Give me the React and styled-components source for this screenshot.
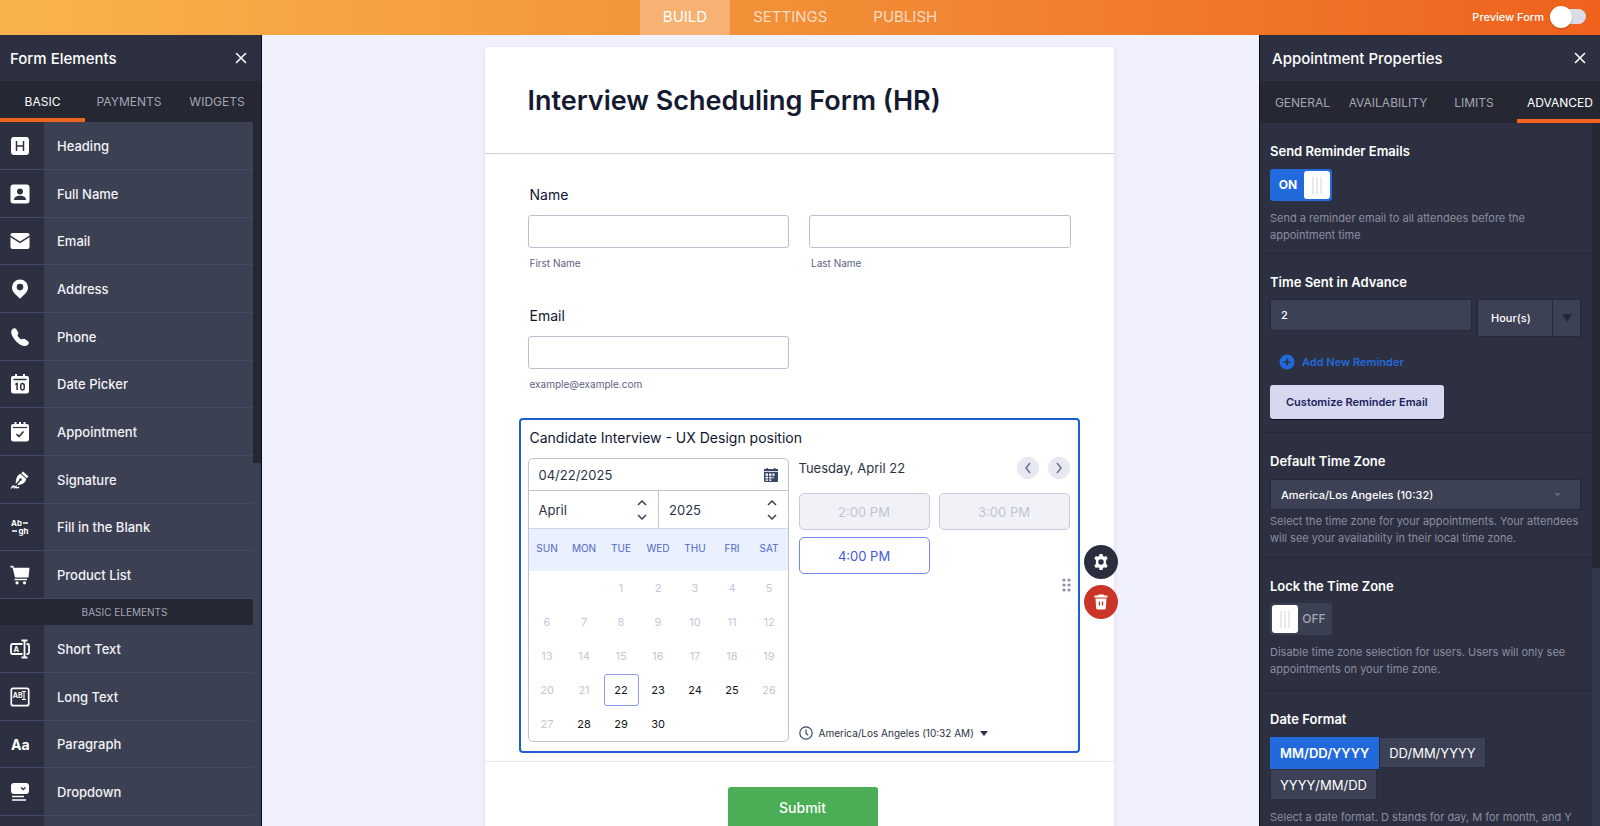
import React from "react";
import styled, { createGlobalStyle, css } from "styled-components";

const Global = createGlobalStyle`
  * { box-sizing: border-box; }
  html, body, #root { height: 100%; }
  body {
    margin: 0;
    overflow: hidden;
    font-family: Inter, "Liberation Sans", sans-serif;
    color: #0f1631;
    background: #f1f0fd;
  }
  button, input, select { font: inherit; color: inherit; }
  button { padding: 0; border: 0; background: none; cursor: pointer; }
  h1, h2, h3, p, ul, fieldset { margin: 0; padding: 0; border: 0; }
  ul { list-style: none; }
`;

const Page = styled.div`
  height: 100vh;
  display: grid;
  grid-template-rows: 35px minmax(0, 1fr);
`;

/* ---------- top bar ---------- */
const TopBar = styled.header`
  display: grid;
  grid-template-columns: 1fr auto 1fr;
  align-items: stretch;
  background: linear-gradient(90deg, #f8b44c 0%, #f18a34 55%, #ee611d 100%);
`;
const TopTabs = styled.nav`
  grid-column: 2;
  display: flex;
`;
const TopTab = styled.a`
  display: flex;
  align-items: center;
  padding: 0 23px 2px;
  font-size: 15px;
  text-decoration: none;
  color: ${(p) => (p.$active ? "#ffffff" : "#fcdcc2")};
  background: ${(p) => (p.$active ? "#f6b173" : "transparent")};
`;
const Preview = styled.label`
  justify-self: end;
  display: flex;
  align-items: center;
  gap: 6px;
  padding: 0 14px 2px 0;
  font-size: 11px;
  font-weight: 500;
  color: #ffffff;
`;
const PreviewSwitch = styled.input`
  appearance: none;
  display: flex;
  align-items: center;
  width: 36px;
  height: 15px;
  margin: 0;
  border-radius: 8px;
  background: #dcdce6;
  &::before {
    content: "";
    width: 22px;
    height: 22px;
    flex: none;
    border-radius: 50%;
    background: #ffffff;
    box-shadow: 0 1px 2px rgba(120, 50, 0, 0.4);
  }
`;

const Workspace = styled.div`
  display: grid;
  grid-template-columns: 262px minmax(0, 1fr) 341px;
  min-height: 0;
`;

/* ---------- side panels ---------- */
const Panel = styled.aside`
  display: flex;
  flex-direction: column;
  min-height: 0;
  overflow: hidden;
  color: #ffffff;
  background: #2d3040;
  border: 0 solid #0b0c1c;
  border-width: ${(p) => (p.$side === "left" ? "0 1px 0 0" : "0 0 0 1px")};
`;
const PanelHeader = styled.div`
  flex: none;
  display: flex;
  align-items: center;
  justify-content: space-between;
  height: 46px;
  padding: 0 14px 0 ${(p) => (p.$side === "left" ? "10px" : "12px")};
`;
const PanelTitle = styled.h2`
  font-size: 15px;
  font-weight: 500;
`;
const IconButton = styled.button`
  display: flex;
`;
const PanelTabs = styled.nav`
  flex: none;
  display: flex;
  height: ${(p) => (p.$side === "left" ? "41px" : "42px")};
  background: #252733;
`;
const PanelTab = styled.a`
  flex: 0 0 ${(p) => p.$basis};
  display: flex;
  align-items: center;
  justify-content: center;
  padding-top: 4px;
  font-size: 12px;
  text-decoration: none;
  color: ${(p) => (p.$active ? "#ffffff" : "#a3a6b5")};
  border-bottom: 4px solid ${(p) => (p.$active ? "#f0641f" : "transparent")};
`;
const PanelBody = styled.div`
  flex: 1;
  min-height: 0;
  overflow: hidden;
  display: grid;
  grid-template-columns: minmax(0, 1fr) 8px;
`;
const PanelContent = styled.div`
  display: flex;
  flex-direction: column;
  min-height: 0;
`;
const ScrollTrack = styled.div`
  background: ${(p) => p.$track};
`;
const ScrollThumb = styled.div`
  height: ${(p) => p.$size};
  background: #252733;
`;

const ElementRow = styled.li`
  display: grid;
  grid-template-columns: 44px 1fr;
  height: 48px;
  border-bottom: 1px solid #434967;
  &:nth-child(3n) { height: 47px; }
`;
const ElementIcon = styled.span`
  display: flex;
  align-items: center;
  padding-left: 10px;
  background: #2d3040;
`;
const ElementName = styled.button`
  padding-left: 13px;
  text-align: left;
  font-size: 13px;
  font-weight: 500;
  color: #f2f2f6;
  background: #3c4053;
`;
/* Carries the two column colours down to the end of the panel. */
const ListEnd = styled.div`
  flex: 1;
  margin-left: 44px;
  background: #3c4053;
`;
const GroupTitle = styled.h3`
  flex: none;
  display: flex;
  align-items: center;
  justify-content: center;
  height: 26px;
  padding-right: 4px;
  font-size: 10px;
  font-weight: 400;
  color: #a3a6b5;
  background: #252733;
`;

/* ---------- form canvas ---------- */
/* The left padding makes up for the narrower left panel, so that the form is centred in the window. */
const Canvas = styled.main`
  display: flex;
  justify-content: center;
  align-items: flex-start;
  min-height: 0;
  padding: 12px 0 0 77px;
  overflow: hidden;
  background: #f1f0fd;
`;
const FormCard = styled.form`
  width: 629px;
  min-height: 100%;
  flex: none;
  border-radius: 4px 4px 0 0;
  background: #ffffff;
  box-shadow: 0 1px 4px rgba(60, 60, 130, 0.12);
`;
const FormHeader = styled.div`
  padding: 36px 43px 34px;
  border-bottom: 1px solid #cdcfdd;
`;
const FormTitle = styled.h1`
  font-size: 27px;
  line-height: 36px;
  font-weight: 600;
  color: #141a30;
`;
const Questions = styled.div`
  padding: 30px 34px 8px;
  border-bottom: 1px solid #e6e7f3;
`;
const Question = styled.fieldset`
  padding: 0 9px;
  margin-bottom: ${(p) => p.$gap};
`;
const QuestionLabel = styled.div`
  padding-left: 2px;
  margin-bottom: 9px;
  font-size: 14px;
  line-height: 22px;
  color: #0f1631;
`;
const FieldPair = styled.div`
  display: grid;
  grid-template-columns: 1fr 1fr;
  gap: 20px;
`;
const Field = styled.label`
  display: block;
`;
const TextInput = styled.input`
  display: block;
  width: 100%;
  height: 33px;
  padding: 0 8px;
  border: 1px solid #bcbfce;
  border-radius: 3px;
  background: #ffffff;
`;
const SubLabel = styled.span`
  display: block;
  padding: 6px 2px 0;
  font-size: 10px;
  line-height: 18px;
  color: #5d6380;
`;

const Selected = styled.section`
  position: relative;
  padding: 7px 8px 9px 7px;
  border: 2px solid #1a5fd3;
  border-radius: 4px;
`;
const Scheduler = styled.div`
  display: grid;
  grid-template-columns: 261px minmax(0, 1fr);
  gap: 10px;
`;
const Calendar = styled.div`
  border: 1px solid #bfc3d6;
  border-radius: 5px;
  overflow: hidden;
  color: #2b3245;
`;
const DateRow = styled.label`
  display: flex;
  align-items: center;
  height: 32px;
  padding: 0 10px;
  border-bottom: 1px solid #bfc3d6;
`;
const DateInput = styled.input`
  flex: 1;
  min-width: 0;
  padding: 0;
  border: 0;
  outline: 0;
  font-size: 13px;
  background: none;
`;
const MonthRow = styled.div`
  display: grid;
  grid-template-columns: 1fr 1fr;
  height: 38px;
  border-bottom: 1px solid #d2d6e8;
`;
const Stepper = styled.div`
  display: flex;
  align-items: center;
  justify-content: space-between;
  padding: 0 11px 0 10px;
  font-size: 13px;
  & + & { border-left: 1px solid #bfc3d6; }
`;
const StepButtons = styled.div`
  display: grid;
  gap: 8px;
`;
const Days = styled.table`
  width: 100%;
  border-collapse: collapse;
  table-layout: fixed;
  text-align: center;
`;
const Weekday = styled.th`
  height: 42px;
  padding: 0 0 4px;
  font-size: 10px;
  font-weight: 400;
  color: #5068c6;
  background: #eaf0fe;
`;
const DayCell = styled.td`
  height: 34px;
  padding: 0;
`;
const DayButton = styled.button`
  width: 35px;
  height: 32px;
  border: 1px solid ${(p) => (p.$selected ? "#8c9bf0" : "transparent")};
  border-radius: 3px;
  font-size: 11px;
  line-height: 28px;
  color: ${(p) => (p.$open ? "#10131c" : "#c4c8d6")};
`;

const SlotsPane = styled.div`
  display: flex;
  flex-direction: column;
`;
const SlotsHeader = styled.div`
  display: flex;
  align-items: center;
  gap: 9px;
  height: 20px;
  margin-bottom: 15px;
  font-size: 13px;
  color: #2b3245;
`;
const SlotsDate = styled.span`
  flex: 1;
`;
const RoundButton = styled.button`
  display: flex;
  align-items: center;
  justify-content: center;
  width: 22px;
  height: 22px;
  border-radius: 50%;
  background: #e7e8f1;
`;
const Slots = styled.div`
  display: grid;
  grid-template-columns: 1fr 1fr;
  gap: 7px 9px;
`;
const Slot = styled.button`
  height: 37px;
  border: 1px solid #c8cbdb;
  border-radius: 5px;
  font-size: 13px;
  ${(p) =>
    p.disabled
      ? css`color: #c0c4d3; background: #f1f2f7;`
      : css`color: #3f59d8; border-color: #7088f0; background: #ffffff;`}
`;
const ZoneButton = styled.button`
  align-self: flex-start;
  display: flex;
  align-items: center;
  gap: 6px;
  margin-top: auto;
  font-size: 10px;
  line-height: 18px;
  color: #2b3245;
`;
const DragHandle = styled.span`
  position: absolute;
  right: 6px;
  top: 158px;
  display: flex;
`;
const FloatingActions = styled.div`
  position: absolute;
  right: -40px;
  top: 125px;
  display: grid;
  gap: 6px;
`;
const ActionButton = styled.button`
  display: flex;
  align-items: center;
  justify-content: center;
  width: 34px;
  height: 34px;
  border-radius: 50%;
  background: ${(p) => p.$tone};
`;
const SubmitArea = styled.div`
  display: flex;
  justify-content: center;
  padding: 25px 0 30px 7px;
`;
const Submit = styled.button`
  width: 150px;
  height: 41px;
  border-radius: 3px;
  font-size: 14px;
  font-weight: 500;
  color: #ffffff;
  background: #4bae57;
`;

/* ---------- property panel ---------- */
const Property = styled.section`
  padding: 19px 11px ${(p) => p.$bottom} 10px;
  border-bottom: 1px solid #252836;
  &:last-child { border-bottom: 0; }
`;
const PropertyName = styled.h3`
  margin-bottom: ${(p) => p.$gap || "8px"};
  font-size: 13px;
  line-height: 18px;
  font-weight: 600;
`;
const Help = styled.p`
  margin-top: ${(p) => p.$gap || "9px"};
  font-size: 11px;
  line-height: 17px;
  color: #8b8ea0;
`;
const Toggle = styled.label`
  display: flex;
  flex-direction: ${(p) => (p.$on ? "row" : "row-reverse")};
  align-items: center;
  width: 62px;
  height: 32px;
  padding: 2px;
  border-radius: 3px;
  font-size: 12px;
  font-weight: ${(p) => (p.$on ? 700 : 500)};
  color: ${(p) => (p.$on ? "#ffffff" : "#a3a6b5")};
  background: ${(p) => (p.$on ? "#2269dc" : "#3c4053")};
`;
const ToggleText = styled.span`
  flex: 1;
  padding-bottom: 2px;
  text-align: center;
`;
const ToggleInput = styled.input`
  appearance: none;
  display: flex;
  align-items: center;
  justify-content: center;
  width: 26px;
  height: 28px;
  margin: 0;
  border-radius: 3px;
  background: #ffffff;
  &::before {
    content: "";
    width: 10px;
    height: 17px;
    background: repeating-linear-gradient(90deg, #e9e9ec 0 2px, #ffffff 2px 4px);
  }
`;
const TimeRow = styled.div`
  display: grid;
  grid-template-columns: minmax(0, 1fr) 104px;
  align-items: start;
  gap: 5px;
`;
const DarkInput = styled.input`
  width: 100%;
  height: 32px;
  padding: 0 10px;
  border: 1px solid #252836;
  font-size: 11px;
  font-weight: 500;
  background: #3c4155;
`;
const SelectBox = styled.div`
  display: grid;
  grid-template-columns: minmax(0, 1fr) ${(p) => p.$arrow};
  height: ${(p) => p.$height};
  border: 1px solid #252836;
  background: #3c4155;
`;
const SelectInput = styled.select`
  appearance: none;
  width: 100%;
  border: 0;
  padding: 0 0 0 ${(p) => p.$inset};
  font-size: 11px;
  font-weight: 500;
  background: none;
  outline: 0;
`;
const SelectArrow = styled.span`
  display: flex;
  align-items: center;
  justify-content: center;
  border-left: ${(p) => (p.$divided ? "1px solid #252836" : "0")};
`;
const AddReminder = styled.button`
  display: flex;
  align-items: center;
  gap: 7px;
  margin: 17px 0 15px 9px;
  font-size: 11px;
  line-height: 16px;
  font-weight: 600;
  color: #2269dc;
`;
const Customize = styled.button`
  display: block;
  height: 34px;
  padding: 0 16px;
  border-radius: 3px;
  font-size: 11px;
  font-weight: 600;
  color: #1b1f5c;
  background: #d6d8f0;
  box-shadow: 0 1px 0 #0b0c1c;
`;
const Formats = styled.div`
  display: flex;
  flex-wrap: wrap;
`;
const Format = styled.button`
  height: ${(p) => (p.$active ? "32px" : "31px")};
  padding: 0 9px;
  border: 1px solid ${(p) => (p.$active ? "#2269dc" : "#292c3b")};
  font-size: 13px;
  font-weight: ${(p) => (p.$active ? 600 : 400)};
  background: ${(p) => (p.$active ? "#2269dc" : "#3c4155")};
`;

/* ---------- drawings ---------- */
const Close = () => (
  <svg width="12" height="12" viewBox="0 0 12 12" stroke="#fff" strokeWidth="1.6" strokeLinecap="round">
    <path d="M1.5 1.5l9 9M10.5 1.5l-9 9" />
  </svg>
);
const Chevron = ({ dir, color = "#3a4258", w = 10 }) => {
  const d = { up: "M1 5l4-4 4 4", down: "M1 1l4 4 4-4" }[dir];
  return (
    <svg width={w} height="6" viewBox="0 0 10 6" fill="none" stroke={color} strokeWidth="1.5">
      <path d={d} />
    </svg>
  );
};
const Caret = ({ w, h, color }) => (
  <svg width={w} height={h} viewBox="0 0 10 8" preserveAspectRatio="none" fill={color}>
    <path d="M0 0h10L5 8z" />
  </svg>
);

const D = "#2d3040";
const icons = {
  heading: (
    <>
      <rect x="1" y="1" width="18" height="18" rx="3" />
      <path d="M6.500 5v10M13.500 5v10M6.500 10h7" stroke={D} strokeWidth="1.500" fill="none" />
    </>
  ),
  user: (
    <>
      <rect x="0.500" y="0.500" width="19" height="19" rx="3" />
      <circle cx="10" cy="7.500" r="3" fill={D} />
      <path d="M4 16c0-3 3-4.300 6-4.300s6 1.300 6 4.300z" fill={D} />
    </>
  ),
  mail: (
    <>
      <path d="M2.500 2h15a2 2 0 012 2v.5L10 10.500.5 4.500V4a2 2 0 012-2z" />
      <path d="M.5 6.200L10 12.200l9.500-6V16a2 2 0 01-2 2h-15a2 2 0 01-2-2z" />
    </>
  ),
  pin: <path fillRule="evenodd" d="M10 .5a8 8 0 00-8 8C2 13.500 7 16.500 10 19.800c3-3.300 8-6.300 8-11.300a8 8 0 00-8-8zm0 4.300a3.300 3.300 0 110 6.600 3.300 3.300 0 010-6.600z" />,
  phone: <path d="M2 2.500C3.500 1 5.500.9 6.500 2.400L8 5c.7 1.300.3 2.300-.6 3.300.8 1.800 2.300 3.400 4.200 4.200 1-.8 2.300-1 3.400-.3l2.800 1.900c1.400 1 1.300 2.700-.1 3.800-2.600 2.200-7 1-11.300-3.200C1.800 10.200 0 5 2 2.500z" />,
  date: (
    <>
      <path d="M5 0h2v2h6V0h2v2h2a2 2 0 012 2v13a2.500 2.500 0 01-2.500 2.500h-13A2.500 2.500 0 011 17V4a2 2 0 012-2h2z" />
      <path d="M3.500 5.500h13" stroke={D} strokeWidth="1.500" />
      <path d="M5.300 10.500l1.800-1v6.500M10.800 11.300a1.700 1.700 0 013.400 0v2.900a1.700 1.700 0 01-3.400 0z" stroke={D} strokeWidth="1.500" fill="none" />
    </>
  ),
  appointment: (
    <>
      <path d="M4.500 0h2v2h2.500V0h2v2h2.500V0h2v2H17a2 2 0 012 2v13a2.500 2.500 0 01-2.500 2.500h-13A2.500 2.500 0 011 17V4a2 2 0 012-2h1.500z" />
      <path d="M3 5.500h14" stroke={D} strokeWidth="1.200" />
      <path d="M6.500 12l2.500 2.500 4.500-5" stroke={D} strokeWidth="1.600" fill="none" />
    </>
  ),
  signature: (
    <>
      <path d="M13 1.500l5.500 5-1.800 1.700-5.400-5z" />
      <path fillRule="evenodd" d="M10.500 3.800l5.700 5.300c-.5 3.500-3.500 5.700-9.200 6.200l3.300-4.500a1.300 1.300 0 10-1-.8L5.800 14C5.500 8.500 7.500 5 10.500 3.800z" />
      <path d="M1 18.500c2-3 3-3.500 3-1.500s1.500 0 2-.5c.5 2 2 1.500 3 .5" stroke="#fff" strokeWidth="1.300" fill="none" />
    </>
  ),
  blank: (
    <>
      <path d="M13 6h5M2 14h5" stroke="#fff" strokeWidth="1.600" />
      <text x="1" y="8.500" fontSize="8" fontWeight="700">Ab</text>
      <text x="8.500" y="16.500" fontSize="8" fontWeight="700">gh</text>
    </>
  ),
  cart: (
    <>
      <path d="M.5 0.800h2.700l.8 2h15.500l-1 9.700H5L2.500 2.500H.5zM4.500 13.800h12.500v1.500H4.500z" />
      <circle cx="7" cy="17.800" r="1.600" />
      <circle cx="14.500" cy="17.800" r="1.600" />
    </>
  ),
  short: (
    <>
      <path d="M12.500 5H2.500a1.500 1.500 0 00-1.500 1.500v7A1.500 1.500 0 002.500 15h10M16.500 5h1A1.500 1.500 0 0119 6.500v7a1.500 1.500 0 01-1.500 1.500h-1" stroke="#fff" strokeWidth="1.800" fill="none" />
      <path d="M11.500 1.500h6M11.500 18.500h6M14.500 1.500v17" stroke="#fff" strokeWidth="1.800" fill="none" />
      <text x="3.500" y="12.800" fontSize="7.500" fontWeight="700">A</text>
    </>
  ),
  long: (
    <>
      <rect x="1.300" y="1.300" width="17.400" height="17.400" rx="2" fill="none" stroke="#fff" strokeWidth="1.700" />
      <path d="M12 4.500h4M12 12.500h4M14 4.500v8" stroke="#fff" strokeWidth="1.100" fill="none" />
      <text x="2.800" y="11.200" fontSize="7" fontWeight="700">AB</text>
    </>
  ),
  paragraph: <text x="1" y="15.500" fontSize="14" fontWeight="700">Aa</text>,
  dropdown: (
    <>
      <rect x="1" y="1" width="18" height="11" rx="3" />
      <path d="M11 5.500l2.200 2 2.200-2" stroke={D} strokeWidth="1.400" fill="none" />
      <path d="M2 14.500h12M2 18h14" stroke="#fff" strokeWidth="1.700" />
    </>
  ),
};
const Glyph = ({ name }) => (
  <svg width="20" height="20" viewBox="0 0 20 20" fill="#fff" aria-hidden="true">
    {icons[name]}
  </svg>
);

const CalendarIcon = () => (
  <svg width="14" height="14" viewBox="0 0 14 14">
    <path d="M2.500 0h1.500v1h6V0h1.500v1H14v12a1 1 0 01-1 1H1a1 1 0 01-1-1V1h2.500z" fill="#3a4668" />
    <path d="M0 3.500h14" stroke="#fff" strokeWidth="0.800" />
    <path d="M1.500 5.500h2.500v2.200H1.500zM5 5.500h2.500v2.200H5zM8.500 5.500h2v2.200h-2zM1.500 8.700h2.500v1.700H1.500zM5 8.700h2.500v1.700H5zM8.500 8.700h1v1.700h-1zM1.500 11.400h2.500v1.400H1.500zM5 11.400h2.500v1.400H5z" fill="#fff" />
  </svg>
);
const Side = ({ flip }) => (
  <svg width="8" height="12" viewBox="0 0 8 12" fill="none" stroke="#717892" strokeWidth="1.700">
    <path d={flip ? "M2 1l4 5-4 5" : "M6 1L2 6l4 5"} />
  </svg>
);
const Clock = () => (
  <svg width="14" height="14" viewBox="0 0 14 14" fill="none" stroke="#3a4a68" strokeWidth="1.200">
    <circle cx="7" cy="7" r="6.200" />
    <path d="M7 3.500V7.500l2.200 1.700" />
  </svg>
);
const Dots = () => (
  <svg width="10" height="14" viewBox="0 0 10 14" fill="#8b8fa8">
    {[2, 7, 12].map((y) => [2, 7].map((x) => <circle key={`${x}${y}`} cx={x} cy={y} r="1.600" />))}
  </svg>
);
const Gear = () => (
  <svg width="16" height="16" viewBox="0 0 16 16" fill="#fff">
    <path fillRule="evenodd" d="M6.500 0h3l.4 2.100 1.300.7 2-.8 1.500 2.600-1.600 1.400v4l1.600 1.400-1.500 2.600-2-.8-1.300.7-.4 2.100h-3l-.4-2.100-1.300-.7-2 .8L1.300 11.400 2.900 10V6L1.300 4.600 2.800 2l2 .8 1.300-.7zM8 5.300a2.700 2.700 0 100 5.400 2.700 2.700 0 000-5.400z" />
  </svg>
);
const Trash = () => (
  <svg width="14" height="16" viewBox="0 0 14 16">
    <path d="M4.500 0.500h5l.5 1h3.500v2H.5v-2H4zM1.500 4.500h11l-.7 9.700a1.500 1.500 0 01-1.500 1.300H3.700a1.500 1.500 0 01-1.500-1.300z" fill="#fff" />
    <path d="M5.500 7.500v4M8.500 7.500v4" stroke="#c93526" strokeWidth="1.300" />
  </svg>
);
const Plus = () => (
  <svg width="16" height="16" viewBox="0 0 16 16">
    <circle cx="8" cy="8" r="7.500" fill="#2269dc" />
    <path d="M8 4.500v7M4.500 8h7" stroke={D} strokeWidth="1.500" />
  </svg>
);

/* ---------- data ---------- */
const commonElements = [
  ["heading", "Heading"],
  ["user", "Full Name"],
  ["mail", "Email"],
  ["pin", "Address"],
  ["phone", "Phone"],
  ["date", "Date Picker"],
  ["appointment", "Appointment"],
  ["signature", "Signature"],
  ["blank", "Fill in the Blank"],
  ["cart", "Product List"],
];
const basicElements = [
  ["short", "Short Text"],
  ["long", "Long Text"],
  ["paragraph", "Paragraph"],
  ["dropdown", "Dropdown"],
];
const weekdays = ["SUN", "MON", "TUE", "WED", "THU", "FRI", "SAT"];
const openDays = [22, 23, 24, 25, 28, 29, 30];
const weeks = [0, 1, 2, 3, 4].map((w) =>
  weekdays.map((_, i) => {
    const n = w * 7 + i - 1;
    return n >= 1 && n <= 30 ? n : null;
  })
);

const ElementList = ({ items }) => (
  <ul>
    {items.map(([icon, name]) => (
      <ElementRow key={name}>
        <ElementIcon><Glyph name={icon} /></ElementIcon>
        <ElementName type="button">{name}</ElementName>
      </ElementRow>
    ))}
  </ul>
);

const StepperField = ({ children }) => (
  <Stepper>
    <span>{children}</span>
    <StepButtons>
      <IconButton type="button" aria-label={`Next from ${children}`}><Chevron dir="up" /></IconButton>
      <IconButton type="button" aria-label={`Previous from ${children}`}><Chevron dir="down" /></IconButton>
    </StepButtons>
  </Stepper>
);

const OnOff = ({ on, label }) => (
  <Toggle $on={on}>
    <ToggleText>{on ? "ON" : "OFF"}</ToggleText>
    <ToggleInput type="checkbox" defaultChecked={on} aria-label={label} />
  </Toggle>
);

export default function App() {
  return (
    <Page>
      <Global />
      <TopBar>
        <TopTabs>
          <TopTab href="#build" $active>BUILD</TopTab>
          <TopTab href="#settings">SETTINGS</TopTab>
          <TopTab href="#publish">PUBLISH</TopTab>
        </TopTabs>
        <Preview>
          Preview Form
          <PreviewSwitch type="checkbox" />
        </Preview>
      </TopBar>

      <Workspace>
        <Panel $side="left">
          <PanelHeader $side="left">
            <PanelTitle>Form Elements</PanelTitle>
            <IconButton type="button" aria-label="Close form elements"><Close /></IconButton>
          </PanelHeader>
          <PanelTabs $side="left">
            <PanelTab href="#basic" $basis="85px" $active>BASIC</PanelTab>
            <PanelTab href="#payments" $basis="88px">PAYMENTS</PanelTab>
            <PanelTab href="#widgets" $basis="88px">WIDGETS</PanelTab>
          </PanelTabs>
          <PanelBody>
            <PanelContent>
              <ElementList items={commonElements} />
              <GroupTitle>BASIC ELEMENTS</GroupTitle>
              <ElementList items={basicElements} />
              <ListEnd />
            </PanelContent>
            <ScrollTrack $track="#3c4053"><ScrollThumb $size="341px" /></ScrollTrack>
          </PanelBody>
        </Panel>

        <Canvas>
          <FormCard>
            <FormHeader>
              <FormTitle>Interview Scheduling Form (HR)</FormTitle>
            </FormHeader>
            <Questions>
              <Question $gap="33px">
                <QuestionLabel>Name</QuestionLabel>
                <FieldPair>
                  <Field><TextInput type="text" /><SubLabel>First Name</SubLabel></Field>
                  <Field><TextInput type="text" /><SubLabel>Last Name</SubLabel></Field>
                </FieldPair>
              </Question>
              <Question $gap="25px">
                <QuestionLabel>Email</QuestionLabel>
                <FieldPair>
                  <Field><TextInput type="email" /><SubLabel>example@example.com</SubLabel></Field>
                </FieldPair>
              </Question>
              <Selected>
                <QuestionLabel>Candidate Interview - UX Design position</QuestionLabel>
                <Scheduler>
                  <Calendar>
                    <DateRow>
                      <DateInput type="text" defaultValue="04/22/2025" aria-label="Appointment date" />
                      <CalendarIcon />
                    </DateRow>
                    <MonthRow>
                      <StepperField>April</StepperField>
                      <StepperField>2025</StepperField>
                    </MonthRow>
                    <Days>
                      <thead>
                        <tr>{weekdays.map((d) => <Weekday key={d}>{d}</Weekday>)}</tr>
                      </thead>
                      <tbody>
                        {weeks.map((week, w) => (
                          <tr key={w}>
                            {week.map((n, i) => (
                              <DayCell key={i}>
                                {n && (
                                  <DayButton type="button" $open={openDays.includes(n)} $selected={n === 22}>
                                    {n}
                                  </DayButton>
                                )}
                              </DayCell>
                            ))}
                          </tr>
                        ))}
                      </tbody>
                    </Days>
                  </Calendar>
                  <SlotsPane>
                    <SlotsHeader>
                      <SlotsDate>Tuesday, April 22</SlotsDate>
                      <RoundButton type="button" aria-label="Previous day"><Side /></RoundButton>
                      <RoundButton type="button" aria-label="Next day"><Side flip /></RoundButton>
                    </SlotsHeader>
                    <Slots>
                      <Slot type="button" disabled>2:00 PM</Slot>
                      <Slot type="button" disabled>3:00 PM</Slot>
                      <Slot type="button">4:00 PM</Slot>
                    </Slots>
                    <ZoneButton type="button">
                      <Clock />
                      America/Los Angeles (10:32 AM)
                      <Caret w={8} h={5} color="#2b3245" />
                    </ZoneButton>
                  </SlotsPane>
                </Scheduler>
                <DragHandle><Dots /></DragHandle>
                <FloatingActions>
                  <ActionButton type="button" $tone="#2b2e3f" aria-label="Properties"><Gear /></ActionButton>
                  <ActionButton type="button" $tone="#c93526" aria-label="Delete"><Trash /></ActionButton>
                </FloatingActions>
              </Selected>
            </Questions>
            <SubmitArea>
              <Submit type="button">Submit</Submit>
            </SubmitArea>
          </FormCard>
        </Canvas>

        <Panel $side="right">
          <PanelHeader $side="right">
            <PanelTitle>Appointment Properties</PanelTitle>
            <IconButton type="button" aria-label="Close properties"><Close /></IconButton>
          </PanelHeader>
          <PanelTabs $side="right">
            <PanelTab href="#general" $basis="85px">GENERAL</PanelTab>
            <PanelTab href="#availability" $basis="86px">AVAILABILITY</PanelTab>
            <PanelTab href="#limits" $basis="86px">LIMITS</PanelTab>
            <PanelTab href="#advanced" $basis="86px" $active>ADVANCED</PanelTab>
          </PanelTabs>
          <PanelBody>
            <div>
              <Property $bottom="9px">
                <PropertyName $gap="9px">Send Reminder Emails</PropertyName>
                <OnOff on label="Send Reminder Emails" />
                <Help>Send a reminder email to all attendees before the appointment time</Help>
              </Property>
              <Property $bottom="13px">
                <PropertyName>Time Sent in Advance</PropertyName>
                <TimeRow>
                  <DarkInput type="text" defaultValue="2" aria-label="Time Sent in Advance" />
                  <SelectBox $arrow="28px" $height="38px">
                    <SelectInput $inset="13px" aria-label="Unit"><option>Hour(s)</option></SelectInput>
                    <SelectArrow $divided><Caret w={10} h={8} color="#252733" /></SelectArrow>
                  </SelectBox>
                </TimeRow>
                <AddReminder type="button"><Plus />Add New Reminder</AddReminder>
                <Customize type="button">Customize Reminder Email</Customize>
              </Property>
              <Property $bottom="10px">
                <PropertyName $gap="9px">Default Time Zone</PropertyName>
                <SelectBox $arrow="46px" $height="31px">
                  <SelectInput $inset="10px" aria-label="Default Time Zone"><option>America/Los Angeles (10:32)</option></SelectInput>
                  <SelectArrow><Caret w={7} h={4} color="#5a6078" /></SelectArrow>
                </SelectBox>
                <Help $gap="3px">Select the time zone for your appointments. Your attendees will see your availability in their local time zone.</Help>
              </Property>
              <Property $bottom="12px">
                <PropertyName>Lock the Time Zone</PropertyName>
                <OnOff label="Lock the Time Zone" />
                <Help>Disable time zone selection for users. Users will only see appointments on your time zone.</Help>
              </Property>
              <Property $bottom="0">
                <PropertyName $gap="9px">Date Format</PropertyName>
                <Formats>
                  <Format type="button" $active>MM/DD/YYYY</Format>
                  <Format type="button">DD/MM/YYYY</Format>
                  <Format type="button">YYYY/MM/DD</Format>
                </Formats>
                <Help>Select a date format. D stands for day, M for month, and Y</Help>
              </Property>
            </div>
            <ScrollTrack $track="#33374a"><ScrollThumb $size="445px" /></ScrollTrack>
          </PanelBody>
        </Panel>
      </Workspace>
    </Page>
  );
}
